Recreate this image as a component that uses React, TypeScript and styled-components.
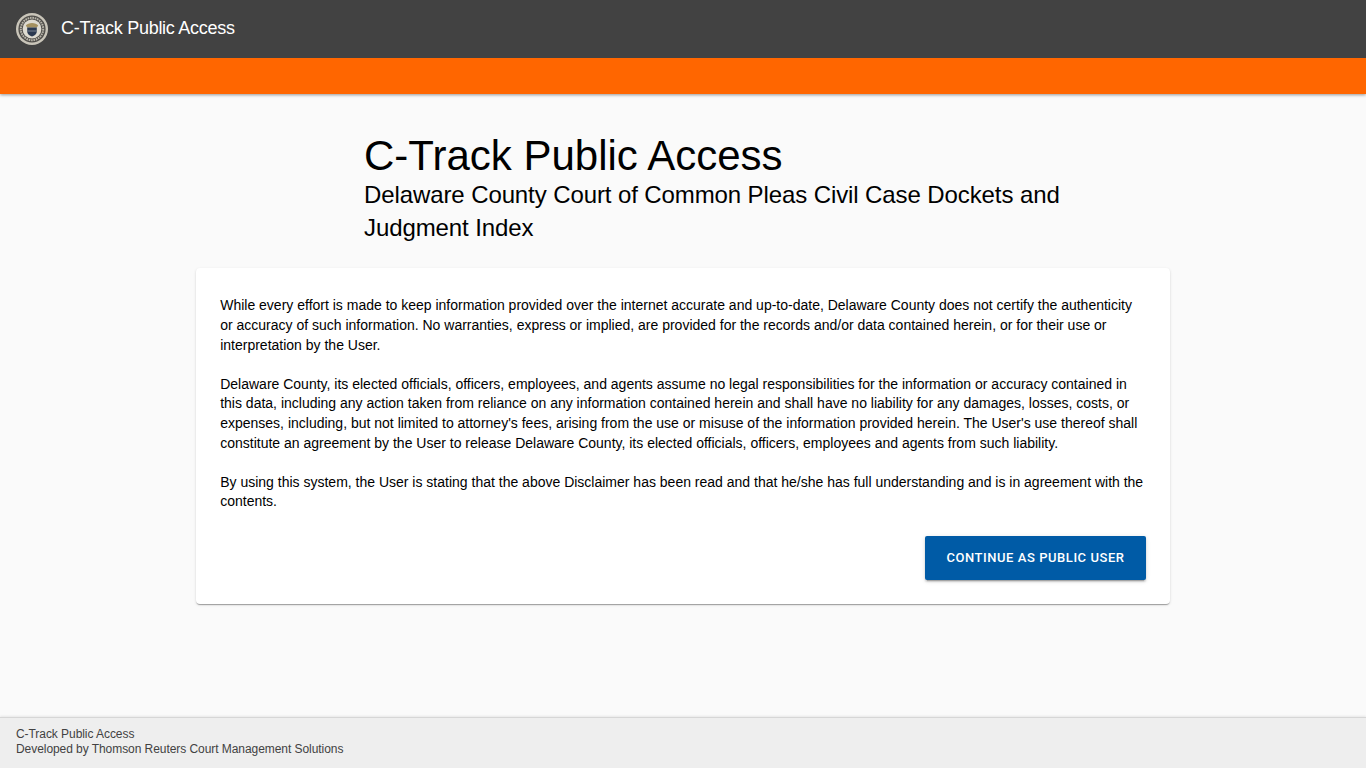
import React from "react";
import styled, { createGlobalStyle } from "styled-components";

const GlobalStyle = createGlobalStyle`
  html, body {
    margin: 0;
    padding: 0;
    height: 100%;
    background: #fafafa;
    font-family: "Liberation Sans", Arial, sans-serif;
  }
  #root {
    height: 100%;
  }
  * {
    box-sizing: border-box;
  }
`;

const Page = styled.div`
  display: flex;
  flex-direction: column;
  height: 768px;
  overflow: hidden;
`;

const Header = styled.header`
  flex: none;
  box-shadow: 0 1px 3px rgba(0, 0, 0, 0.4);
  position: relative;
`;

const TitleBar = styled.div`
  display: flex;
  align-items: center;
  gap: 13px;
  height: 58px;
  padding: 0 16px;
  background: #424242;
`;

const BrandName = styled.span`
  padding-bottom: 2px;
  color: #fff;
  font-size: 18px;
  letter-spacing: -0.27px;
`;

const OrangeBar = styled.div`
  height: 36px;
  background: #ff6600;
`;

const Main = styled.main`
  flex: 1;
  display: flex;
  flex-direction: column;
  align-items: center;
  padding-top: 39px;
`;

const Intro = styled.div`
  width: 974px;
  padding: 0 100px 0 168px;
  margin-bottom: 24px;
`;

const Heading = styled.h1`
  margin: 0;
  font-size: 42px;
  font-weight: 400;
  line-height: 45px;
  color: #000;
`;

const SubHeading = styled.h2`
  margin: 0;
  font-size: 24px;
  font-weight: 400;
  line-height: 33px;
  letter-spacing: -0.1px;
  color: #000;
`;

const Card = styled.section`
  width: 974px;
  height: 336px;
  padding: 28.4px 24px 0 24.2px;
  background: #fff;
  border-radius: 4px;
  box-shadow: 0 2px 1px -1px rgba(0, 0, 0, 0.2), 0 1px 1px 0 rgba(0, 0, 0, 0.14),
    0 1px 3px 0 rgba(0, 0, 0, 0.12);
`;

const Paragraph = styled.p`
  margin: 0 0 19.6px;
  font-size: 14px;
  line-height: 19.6px;
  color: #000;
`;

const Actions = styled.div`
  display: flex;
  justify-content: flex-end;
  margin-top: 24px;
`;

const PrimaryButton = styled.button`
  height: 44px;
  width: 221px;
  padding: 0;
  border: 0;
  border-radius: 2px;
  background: #005ba6;
  color: #fff;
  font-family: Roboto, "Liberation Sans", sans-serif;
  font-size: 13px;
  font-weight: 500;
  letter-spacing: 0.55px;
  text-transform: uppercase;
  box-shadow: 0 3px 1px -2px rgba(0, 0, 0, 0.2), 0 2px 2px 0 rgba(0, 0, 0, 0.14),
    0 1px 5px 0 rgba(0, 0, 0, 0.12);
`;

const Footer = styled.footer`
  flex: none;
  height: 51px;
  padding: 9px 16px 0;
  background: #eeeeee;
  border-top: 1px solid #d6d6d6;
  box-shadow: 0 -1px 2px rgba(0, 0, 0, 0.08);
  color: #424242;
  font-size: 12px;
  line-height: 15px;
  letter-spacing: -0.06px;
`;

function Seal() {
  return (
    <svg width="32" height="32" viewBox="0 0 32 32" aria-hidden="true">
      <circle cx="16" cy="16" r="16" fill="#c9c5b9" />
      <circle cx="16" cy="16" r="13.6" fill="#4f4d49" />
      <circle cx="16" cy="16" r="11.2" fill="none" stroke="#b9b6ab" strokeWidth="2" strokeDasharray="1.6 0.8" />
      <circle cx="16" cy="16" r="9.4" fill="#dedbd0" />
      <path d="M9.8 12.6c2.2-3.6 10.2-3.6 12.4 0l-1.4 2h-9.6z" fill="#a4915f" />
      <path d="M11.2 14.4h9.6v4.4c0 2.4-2.4 3.8-4.8 4.8-2.4-1-4.8-2.4-4.8-4.8z" fill="#2b3950" />
      <path d="M11.2 17.4h9.6v1.1h-9.6z" fill="#79828f" />
    </svg>
  );
}

export default function App() {
  return (
    <Page>
      <GlobalStyle />
      <Header>
        <TitleBar>
          <Seal />
          <BrandName>C-Track Public Access</BrandName>
        </TitleBar>
        <OrangeBar />
      </Header>
      <Main>
        <Intro>
          <Heading>C-Track Public Access</Heading>
          <SubHeading>
            Delaware County Court of Common Pleas Civil Case Dockets and Judgment Index
          </SubHeading>
        </Intro>
        <Card>
          <Paragraph>
            While every effort is made to keep information provided over the internet accurate and
            up-to-date, Delaware County does not certify the authenticity or accuracy of such
            information. No warranties, express or implied, are provided for the records and/or data
            contained herein, or for their use or interpretation by the User.
          </Paragraph>
          <Paragraph>
            Delaware County, its elected officials, officers, employees, and agents assume no legal
            responsibilities for the information or accuracy contained in this data, including any
            action taken from reliance on any information contained herein and shall have no
            liability for any damages, losses, costs, or expenses, including, but not limited to
            attorney's fees, arising from the use or misuse of the information provided herein. The
            User's use thereof shall constitute an agreement by the User to release Delaware County,
            its elected officials, officers, employees and agents from such liability.
          </Paragraph>
          <Paragraph>
            By using this system, the User is stating that the above Disclaimer has been read and
            that he/she has full understanding and is in agreement with the contents.
          </Paragraph>
          <Actions>
            <PrimaryButton>Continue as Public User</PrimaryButton>
          </Actions>
        </Card>
      </Main>
      <Footer>
        <div>C-Track Public Access</div>
        <div>Developed by Thomson Reuters Court Management Solutions</div>
      </Footer>
    </Page>
  );
}
